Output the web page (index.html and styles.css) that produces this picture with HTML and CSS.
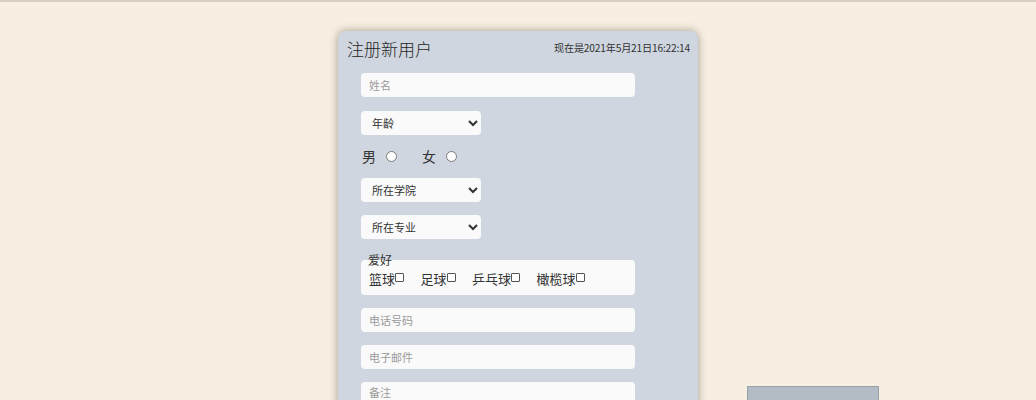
FILE: index.html
```
<!DOCTYPE html>
<html lang="zh">
<head>
<meta charset="utf-8">
<title>注册新用户</title>
<link rel="stylesheet" href="styles.css">
</head>
<body>
<div class="topline"></div>
<form class="card">
  <div class="head">
    <h1 class="title">注册新用户</h1>
    <span class="time">现在是2021年5月21日16:22:14</span>
  </div>
  <div class="fields">
    <input class="text f-name" type="text" placeholder="姓名">
    <select class="sel f-age"><option>年龄</option></select>
    <div class="gender">
      <label class="g">男<input type="radio" name="sex"></label>
      <label class="g">女<input type="radio" name="sex"></label>
    </div>
    <select class="sel f-college"><option>所在学院</option></select>
    <select class="sel f-major"><option>所在专业</option></select>
    <fieldset class="hobby">
      <legend>爱好</legend>
      <div class="hobbies">
        <label class="h">篮球<input type="checkbox"></label>
        <label class="h">足球<input type="checkbox"></label>
        <label class="h">乒乓球<input type="checkbox"></label>
        <label class="h">橄榄球<input type="checkbox"></label>
      </div>
    </fieldset>
    <input class="text f-phone" type="text" placeholder="电话号码">
    <input class="text f-mail" type="text" placeholder="电子邮件">
    <textarea class="text area" placeholder="备注"></textarea>
  </div>
</form>
<button class="submit" type="button"></button>
</body>
</html>
```
FILE: styles.css
```
html, body {
  margin: 0;
  padding: 0;
}
body {
  background: #f7efe2;
  font-family: "Noto Sans CJK SC", "Noto Sans", sans-serif;
  color: #333;
  height: 400px;
  overflow: hidden;
  position: relative;
}
.topline {
  height: 2px;
  background: #d7cfc3;
}
.card {
  width: 360px;
  margin: 29px auto 0;
  background: #cfd6df;
  border-radius: 8px;
  box-shadow: 0 0 8px rgba(60, 50, 30, 0.45);
  height: 420px;
  box-sizing: border-box;
}
.head {
  height: 42px;
  display: flex;
  align-items: center;
  justify-content: space-between;
  padding: 0 8px 9px 9px;
  box-sizing: border-box;
}
.title {
  margin: 0;
  font-size: 17px;
  font-weight: 300;
  color: #262626;
  line-height: 22px;
  position: relative;
  top: 1px;
}
.time {
  font-size: 10.2px;
  color: #333;
  letter-spacing: -0.2px;
}
.fields {
  padding-left: 23px;
  display: flex;
  flex-direction: column;
  align-items: flex-start;
}
.text {
  width: 274px;
  height: 24px;
  box-sizing: border-box;
  border: none;
  border-radius: 4px;
  background: #fafafa;
  padding: 0 8px;
  font-family: inherit;
  font-size: 11px;
  color: #333;
  outline: none;
}
.text::placeholder {
  color: #9a9a9a;
}
.sel {
  width: 120px;
  height: 24px;
  box-sizing: border-box;
  border: none;
  border-radius: 4px;
  background: #fafafa;
  padding: 0 4px 0 7px;
  font-family: inherit;
  font-size: 11px;
  color: #333;
}
.f-age { margin-top: 14px; }
.gender {
  margin-top: 11px;
  height: 20px;
  display: flex;
  align-items: center;
  padding-left: 1px;
}
.g {
  font-size: 14px;
  display: flex;
  align-items: center;
  margin-right: 25px;
}
.g input {
  width: 11px;
  height: 11px;
  margin: 0 0 0 10px;
}
.f-college { margin-top: 12px; }
.f-major { margin-top: 13px; }
.hobby {
  margin: 14px 0 0;
  width: 274px;
  box-sizing: border-box;
  border: none;
  border-radius: 4px;
  background: #fafafa;
  padding: 0 8px 6px 5px;
  min-inline-size: 0;
}
.hobby legend {
  font-size: 12px;
  line-height: 14px;
  padding: 0 2px;
}
.hobbies {
  display: flex;
  align-items: center;
  padding-left: 3px;
  height: 22px;
}
.h {
  font-size: 13px;
  display: flex;
  align-items: center;
  margin-right: 16.5px;
}
.h input {
  appearance: none;
  -webkit-appearance: none;
  width: 9px;
  height: 9px;
  margin: 0;
  border: 1px solid #555;
  border-radius: 1px;
  background: #fff;
  box-sizing: border-box;
  position: relative;
  top: -1px;
}
.f-phone { margin-top: 13px; }
.f-mail { margin-top: 13px; }
.area {
  margin-top: 13px;
  height: 60px;
  padding-top: 2px;
  resize: none;
}
.submit {
  position: absolute;
  left: 747px;
  top: 386px;
  width: 132px;
  height: 24px;
  border: 1px solid #9aa1a6;
  background: #b3bcc4;
  padding: 0;
}
```
